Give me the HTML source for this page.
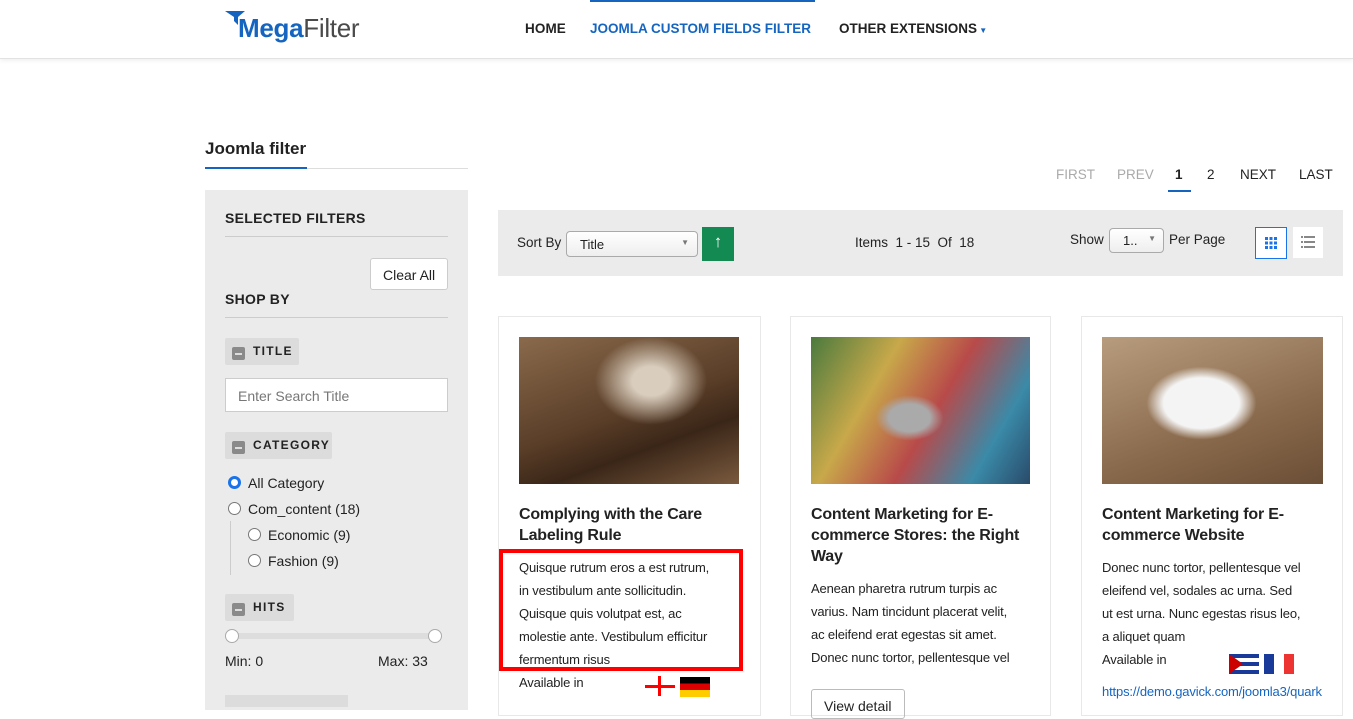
<!DOCTYPE html>
<html><head><meta charset="utf-8">
<style>
*{box-sizing:border-box;margin:0;padding:0}
body{width:1353px;height:704px;overflow:hidden;background:#fff;font-family:"Liberation Sans",sans-serif;color:#222;position:relative}
.abs{position:absolute}
.hdr{left:0;top:0;width:1353px;height:59px;border-bottom:1px solid #e2e2e2;box-shadow:0 2px 4px rgba(0,0,0,.06)}
.nav{font-size:13.5px;font-weight:bold;letter-spacing:.1px;top:21px}
.side{left:205px;top:190px;width:263px;height:520px;background:#ebebeb}
.sh{font-size:14px;font-weight:bold;letter-spacing:.3px}
.line{height:1px;background:#ccc}
.tag{background:#dcdcdc;height:27px;font-size:12px;font-weight:bold;letter-spacing:1.3px;padding:6px 0 0 28px;border-radius:2px}
.tag:before{content:"";position:absolute;left:7px;top:9px;width:13px;height:13px;background:#8a8a8a;border-radius:2px}
.tag:after{content:"";position:absolute;left:10px;top:15px;width:7px;height:1.5px;background:#ddd}
.rad{width:13px;height:13px;border:1px solid #777;border-radius:50%;background:#fff}
.t14{font-size:14px}
.card{border:1px solid #e8e8e8;top:316px;height:400px;background:#fff}
.ct{font-size:16px;font-weight:bold;line-height:21px;color:#222;letter-spacing:-.2px;white-space:nowrap}
.cd{font-size:13px;line-height:23px;color:#222;white-space:nowrap;letter-spacing:-.15px}
.pg{font-size:13.5px;top:167px}
</style></head><body>
<div class="abs hdr"></div>
<svg class="abs" style="left:225px;top:11px" width="20" height="20" viewBox="0 0 20 20"><path d="M0 0H20L13 6V14L9 10V6Z" fill="#1565c0"/></svg>
<div class="abs" style="left:238px;top:13px;font-size:26px;font-weight:bold;color:#1565c0;letter-spacing:-.3px">Mega<span style="color:#4a4a4a;font-weight:normal">Filter</span></div>
<div class="abs nav" style="left:525px">HOME</div>
<div class="abs nav" style="left:590px;color:#1565c0;letter-spacing:0">JOOMLA CUSTOM FIELDS FILTER</div>
<div class="abs" style="left:590px;top:0;width:225px;height:2px;background:#1565c0"></div>
<div class="abs nav" style="left:839px;letter-spacing:0">OTHER EXTENSIONS<span style="color:#1565c0;font-size:8px"> ▼</span></div>

<div class="abs" style="left:205px;top:139px;font-size:17px;font-weight:bold">Joomla filter</div>
<div class="abs" style="left:205px;top:168px;width:263px;height:1px;background:#ddd"></div>
<div class="abs" style="left:205px;top:167px;width:102px;height:2px;background:#1565c0"></div>

<div class="abs side"></div>
<div class="abs sh" style="left:225px;top:210px">SELECTED FILTERS</div>
<div class="abs line" style="left:225px;top:236px;width:223px"></div>
<div class="abs t14" style="left:370px;top:258px;width:78px;height:32px;background:#fff;border:1px solid #ccc;border-radius:3px;padding:8px 0 0 12px">Clear All</div>
<div class="abs sh" style="left:225px;top:291px">SHOP BY</div>
<div class="abs line" style="left:225px;top:317px;width:223px"></div>
<div class="abs tag" style="left:225px;top:338px;width:74px">TITLE</div>
<div class="abs t14" style="left:225px;top:378px;width:223px;height:34px;background:#fff;border:1px solid #ccc;color:#777;padding:9px 0 0 12px">Enter Search Title</div>
<div class="abs tag" style="left:225px;top:432px;width:107px">CATEGORY</div>
<div class="abs rad" style="left:228px;top:476px;border:3.5px solid #1a73e8"></div>
<div class="abs t14" style="left:248px;top:475px">All Category</div>
<div class="abs rad" style="left:228px;top:502px"></div>
<div class="abs t14" style="left:248px;top:501px">Com_content (18)</div>
<div class="abs" style="left:230px;top:521px;width:1px;height:54px;background:#ccc"></div>
<div class="abs rad" style="left:248px;top:528px"></div>
<div class="abs t14" style="left:268px;top:527px">Economic (9)</div>
<div class="abs rad" style="left:248px;top:554px"></div>
<div class="abs t14" style="left:268px;top:553px">Fashion (9)</div>
<div class="abs tag" style="left:225px;top:594px;width:69px">HITS</div>
<div class="abs" style="left:230px;top:633px;width:206px;height:6px;background:#ddd;border-radius:3px"></div>
<div class="abs" style="left:225px;top:629px;width:14px;height:14px;border-radius:50%;background:#fff;border:1px solid #aaa"></div>
<div class="abs" style="left:428px;top:629px;width:14px;height:14px;border-radius:50%;background:#fff;border:1px solid #aaa"></div>
<div class="abs t14" style="left:225px;top:653px">Min: 0</div>
<div class="abs t14" style="left:378px;top:653px">Max: 33</div>
<div class="abs" style="left:225px;top:695px;width:123px;height:12px;background:#dcdcdc"></div>

<div class="abs pg" style="left:1056px;color:#aaa">FIRST</div>
<div class="abs pg" style="left:1117px;color:#aaa">PREV</div>
<div class="abs pg" style="left:1175px;font-weight:bold">1</div>
<div class="abs" style="left:1168px;top:190px;width:23px;height:2px;background:#1565c0"></div>
<div class="abs pg" style="left:1207px">2</div>
<div class="abs pg" style="left:1240px">NEXT</div>
<div class="abs pg" style="left:1299px">LAST</div>

<div class="abs" style="left:498px;top:210px;width:845px;height:66px;background:#ebebeb"></div>
<div class="abs" style="left:517px;top:235px;font-size:13.5px">Sort By</div>
<div class="abs" style="left:566px;top:231px;width:132px;height:26px;background:linear-gradient(#fff,#eee);border:1px solid #aaa;border-radius:4px;font-size:13px;padding:5px 0 0 13px">Title<span style="position:absolute;right:8px;top:6px;font-size:8px;color:#777">▼</span></div>
<div class="abs" style="left:702px;top:227px;width:32px;height:34px;background:#138a52;color:#fff;text-align:center;font-size:17px;padding-top:5px;font-weight:bold">↑</div>
<div class="abs" style="left:855px;top:235px;font-size:13.5px">Items&nbsp; 1 - 15&nbsp; Of&nbsp; 18</div>
<div class="abs" style="left:1070px;top:232px;font-size:13.5px">Show</div>
<div class="abs" style="left:1109px;top:228px;width:55px;height:25px;background:linear-gradient(#fff,#eee);border:1px solid #aaa;border-radius:4px;font-size:13px;padding:4px 0 0 13px">1..<span style="position:absolute;right:7px;top:5px;font-size:8px;color:#777">▼</span></div>
<div class="abs" style="left:1169px;top:232px;font-size:13.5px">Per Page</div>
<div class="abs" style="left:1255px;top:227px;width:32px;height:32px;background:#fff;border:1px solid #1a73e8"></div>
<svg class="abs" style="left:1265px;top:237px" width="12" height="12"><g fill="#1a73e8"><rect x="0" y="0" width="3" height="3"/><rect x="4.5" y="0" width="3" height="3"/><rect x="9" y="0" width="3" height="3"/><rect x="0" y="4.5" width="3" height="3"/><rect x="4.5" y="4.5" width="3" height="3"/><rect x="9" y="4.5" width="3" height="3"/><rect x="0" y="9" width="3" height="3"/><rect x="4.5" y="9" width="3" height="3"/><rect x="9" y="9" width="3" height="3"/></g></svg>
<div class="abs" style="left:1293px;top:227px;width:30px;height:31px;background:#fff"></div>
<svg class="abs" style="left:1301px;top:236px" width="14" height="12"><g fill="#888"><rect x="0" y="0" width="2" height="2"/><rect x="3" y="0" width="11" height="2"/><rect x="0" y="5" width="2" height="2"/><rect x="3" y="5" width="11" height="2"/><rect x="0" y="10" width="2" height="2"/><rect x="3" y="10" width="11" height="2"/></g></svg>

<div class="abs card" style="left:498px;width:263px"></div>
<div class="abs" style="left:519px;top:337px;width:220px;height:147px;background:radial-gradient(ellipse at 60% 30%,#d9cdbd 0 10%,transparent 30%),linear-gradient(160deg,#8a6a4c,#5a3e28 50%,#3a2618 70%,#7a5a3e)"></div>
<div class="abs ct" style="left:519px;top:504px">Complying with the Care<br>Labeling Rule</div>
<div class="abs cd" style="left:519px;top:556px">Quisque rutrum eros a est rutrum,<br>in vestibulum ante sollicitudin.<br>Quisque quis volutpat est, ac<br>molestie ante. Vestibulum efficitur<br>fermentum risus</div>
<div class="abs" style="left:499px;top:549px;width:244px;height:122px;border:4px solid #f00"></div>
<div class="abs cd" style="left:519px;top:671px">Available in</div>
<div class="abs" style="left:645px;top:685px;width:30px;height:3px;background:#f00"></div>
<div class="abs" style="left:658px;top:676px;width:3px;height:20px;background:#f00"></div>
<div class="abs" style="left:680px;top:677px;width:30px;height:20px;background:linear-gradient(#000 33%,#d00 33% 66%,#fc0 66%)"></div>

<div class="abs card" style="left:790px;width:261px"></div>
<div class="abs" style="left:811px;top:337px;width:219px;height:147px;background:radial-gradient(ellipse at 45% 55%,#aaa 0 12%,transparent 20%),linear-gradient(120deg,#4a7a3e,#c8a84a 30%,#b84a4a 55%,#3a8aa8 80%,#2a4a6a)"></div>
<div class="abs ct" style="left:811px;top:504px">Content Marketing for E-<br>commerce Stores: the Right<br>Way</div>
<div class="abs cd" style="left:811px;top:577px">Aenean pharetra rutrum turpis ac<br>varius. Nam tincidunt placerat velit,<br>ac eleifend erat egestas sit amet.<br>Donec nunc tortor, pellentesque vel</div>
<div class="abs t14" style="left:811px;top:689px;width:94px;height:30px;border:1px solid #bbb;border-radius:3px;padding:8px 0 0 12px">View detail</div>

<div class="abs card" style="left:1081px;width:262px"></div>
<div class="abs" style="left:1102px;top:337px;width:221px;height:147px;background:radial-gradient(ellipse at 45% 45%,#f4f4f4 0 22%,transparent 32%),linear-gradient(160deg,#b89c7e,#8a6a4c 60%,#6a4e36)"></div>
<div class="abs ct" style="left:1102px;top:504px">Content Marketing for E-<br>commerce Website</div>
<div class="abs cd" style="left:1102px;top:556px">Donec nunc tortor, pellentesque vel<br>eleifend vel, sodales ac urna. Sed<br>ut est urna. Nunc egestas risus leo,<br>a aliquet quam</div>
<div class="abs cd" style="left:1102px;top:648px">Available in</div>
<div class="abs" style="left:1229px;top:654px;width:30px;height:20px;background:linear-gradient(#1a3a9a 20%,#fff 20% 40%,#1a3a9a 40% 60%,#fff 60% 80%,#1a3a9a 80%)"></div>
<svg class="abs" style="left:1229px;top:654px" width="14" height="20"><path d="M0 0L14 10L0 20Z" fill="#c00"/></svg>
<div class="abs" style="left:1264px;top:654px;width:30px;height:20px;background:linear-gradient(90deg,#1a3a9a 33%,#fff 33% 66%,#e33 66%)"></div>
<div class="abs cd" style="left:1102px;top:680px;color:#1565c0">https://demo.gavick.com/joomla3/quark</div>
</body></html>
